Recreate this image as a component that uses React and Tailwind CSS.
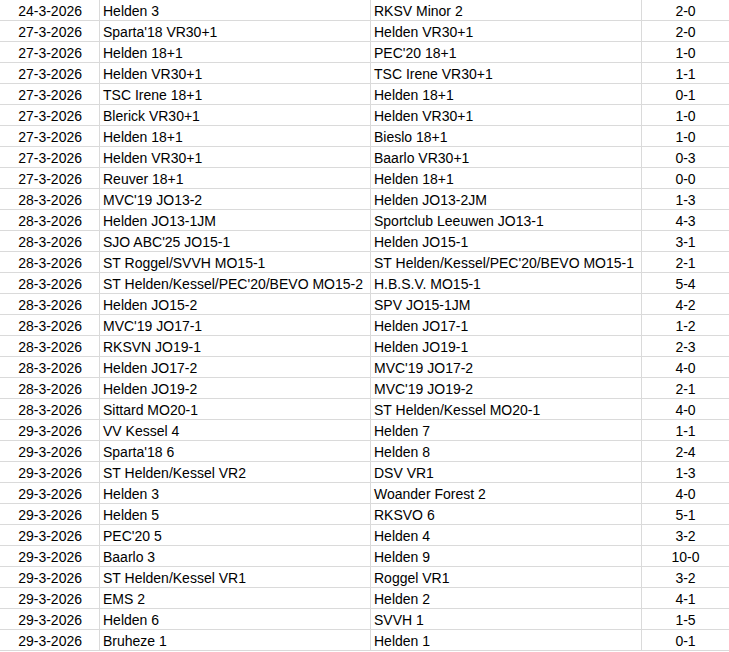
import React from "react";

//! Match rows: date, home, away, score
const rows = [
  ["24-3-2026", "Helden 3", "RKSV Minor 2", "2-0"],
  ["27-3-2026", "Sparta'18 VR30+1", "Helden VR30+1", "2-0"],
  ["27-3-2026", "Helden 18+1", "PEC'20 18+1", "1-0"],
  ["27-3-2026", "Helden VR30+1", "TSC Irene VR30+1", "1-1"],
  ["27-3-2026", "TSC Irene 18+1", "Helden 18+1", "0-1"],
  ["27-3-2026", "Blerick VR30+1", "Helden VR30+1", "1-0"],
  ["27-3-2026", "Helden 18+1", "Bieslo 18+1", "1-0"],
  ["27-3-2026", "Helden VR30+1", "Baarlo VR30+1", "0-3"],
  ["27-3-2026", "Reuver 18+1", "Helden 18+1", "0-0"],
  ["28-3-2026", "MVC'19 JO13-2", "Helden JO13-2JM", "1-3"],
  ["28-3-2026", "Helden JO13-1JM", "Sportclub Leeuwen JO13-1", "4-3"],
  ["28-3-2026", "SJO ABC'25 JO15-1", "Helden JO15-1", "3-1"],
  ["28-3-2026", "ST Roggel/SVVH MO15-1", "ST Helden/Kessel/PEC'20/BEVO MO15-1", "2-1"],
  ["28-3-2026", "ST Helden/Kessel/PEC'20/BEVO MO15-2", "H.B.S.V. MO15-1", "5-4"],
  ["28-3-2026", "Helden JO15-2", "SPV JO15-1JM", "4-2"],
  ["28-3-2026", "MVC'19 JO17-1", "Helden JO17-1", "1-2"],
  ["28-3-2026", "RKSVN JO19-1", "Helden JO19-1", "2-3"],
  ["28-3-2026", "Helden JO17-2", "MVC'19 JO17-2", "4-0"],
  ["28-3-2026", "Helden JO19-2", "MVC'19 JO19-2", "2-1"],
  ["28-3-2026", "Sittard MO20-1", "ST Helden/Kessel MO20-1", "4-0"],
  ["29-3-2026", "VV Kessel 4", "Helden 7", "1-1"],
  ["29-3-2026", "Sparta'18 6", "Helden 8", "2-4"],
  ["29-3-2026", "ST Helden/Kessel VR2", "DSV VR1", "1-3"],
  ["29-3-2026", "Helden 3", "Woander Forest 2", "4-0"],
  ["29-3-2026", "Helden 5", "RKSVO 6", "5-1"],
  ["29-3-2026", "PEC'20 5", "Helden 4", "3-2"],
  ["29-3-2026", "Baarlo 3", "Helden 9", "10-0"],
  ["29-3-2026", "ST Helden/Kessel VR1", "Roggel VR1", "3-2"],
  ["29-3-2026", "EMS 2", "Helden 2", "4-1"],
  ["29-3-2026", "Helden 6", "SVVH 1", "1-5"],
  ["29-3-2026", "Bruheze 1", "Helden 1", "0-1"],
];

const cell = "h-[21px] pt-[2px] leading-[19px] border-r border-b border-[#dadada] whitespace-nowrap overflow-hidden";

export default function App() {
  return (
    <div className="w-[729px] h-[652px] overflow-hidden bg-white text-black text-[14px] font-['Liberation_Sans',Arial,sans-serif]">
      {rows.map((r, i) => (
        <div key={i} className="grid grid-cols-[100px_271px_271px_88px]">
          <div className={`${cell} text-right pr-[17px]`}>{r[0]}</div>
          <div className={`${cell} pl-[3px]`}>{r[1]}</div>
          <div className={`${cell} pl-[3px]`}>{r[2]}</div>
          <div className={`${cell} text-center`}>{r[3]}</div>
        </div>
      ))}
    </div>
  );
}
